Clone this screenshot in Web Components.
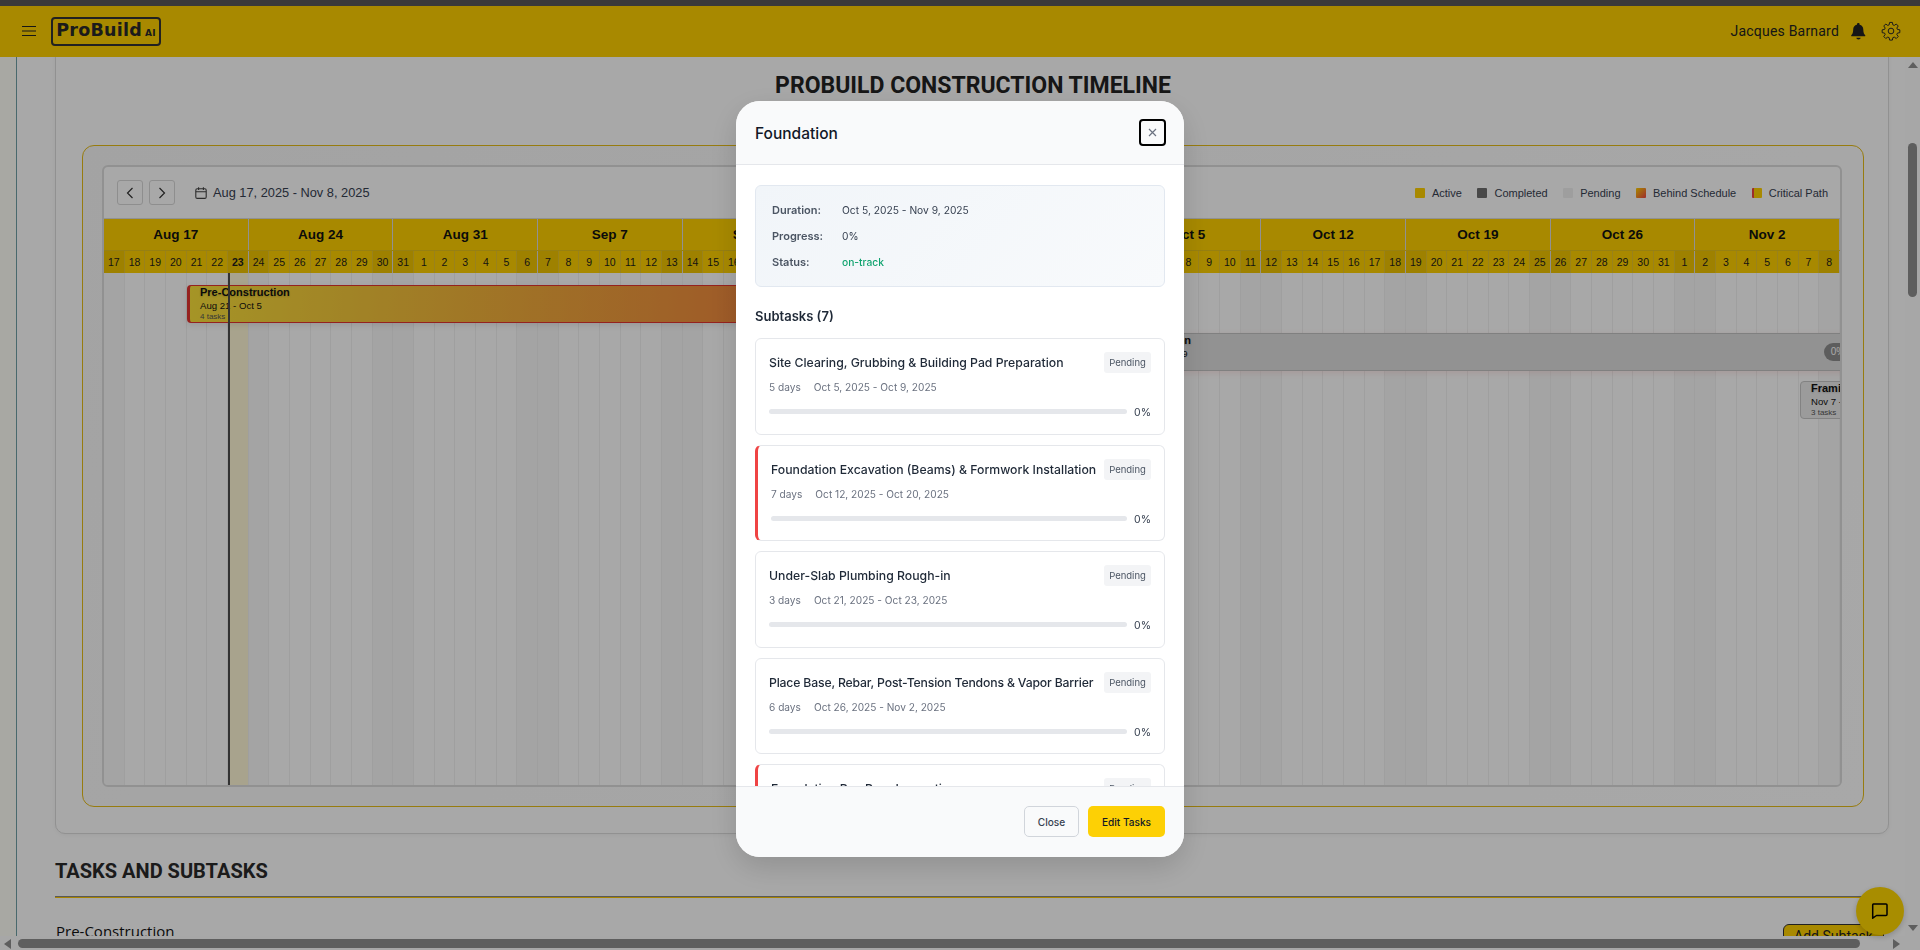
<!DOCTYPE html>
<html>
  <head>
    <meta charset="UTF-8">
    <title>ProBuild Construction Timeline</title>
    <style>
html, body {
  margin: 0;
  height: 950px;
  overflow: hidden;
  background: #fff;
  font-family: "Liberation Sans", Arial, sans-serif;
}
    </style>
    <script type="module">
// small helper: every element stamps its markup into an open shadow root
class Base extends HTMLElement {
  constructor() {
    super();
    this.attachShadow({ mode: 'open' });
  }
  connectedCallback() {
    if (!this.shadowRoot.firstChild) {
      this.shadowRoot.innerHTML = this.render();
    }
  }
}

class PbHeader extends Base {
  render() {
    return `
    <style>
      :host { display: flex; align-items: center; height: 51px; flex: none; background: #ffd100; color: #2a2a2a; box-sizing: border-box; font-family: Roboto, sans-serif; padding: 0 19px 0 22px; }
      .menu { width: 14px; height: 10px; margin-top: -1px; }
      .logo { display: flex; align-items: baseline; justify-content: center; box-sizing: border-box; width: 110px; height: 29px; margin-left: 15px; margin-top: -1px; border: 2px solid #333; border-radius: 4px; font-family: "DejaVu Sans", sans-serif; font-weight: 700; line-height: 23px; font-size: 17.5px; letter-spacing: .25px; }
      .logo small { font-size: 9px; margin-left: 3px; letter-spacing: .2px; }
      .space { flex: 1; }
      .name { font-size: 14px; letter-spacing: .2px; color: #222; margin-top: -2px; }
      .bell { width: 15px; height: 17px; margin-left: 12px; margin-top: -1px; }
      .gear { width: 20px; height: 20px; margin-left: 15px; margin-top: -1px; }
    </style>
    <svg class="menu" viewBox="0 0 14 10" fill="none" stroke="#222" stroke-width="1"><path d="M0 .5h14M0 5h14M0 9.5h14"/></svg>
    <div class="logo">ProBuild<small>AI</small></div>
    <div class="space"></div>
    <span class="name">Jacques Barnard</span>
    <svg class="bell" viewBox="0 0 15 17" fill="#222"><path d="M7.5 0c.7 0 1.1.5 1.1 1.1v.6c2.4.5 3.7 2.4 3.7 4.8 0 3.2.8 4.6 1.9 5.8.3.4.1 1-.5 1H.8c-.6 0-.8-.6-.5-1 1.1-1.2 1.9-2.6 1.9-5.8 0-2.4 1.3-4.3 3.7-4.8v-.6C5.9.5 6.8 0 7.5 0z"/><path d="M5.4 14.8h4.2c0 1.1-.9 1.7-2.1 1.7s-2.1-.6-2.1-1.7z"/></svg>
    <svg class="gear" viewBox="0 0 24 24" fill="none" stroke="#2a2a2a" stroke-width="1.2" stroke-linejoin="round"><path d="M10.3 2.3h3.4l.5 2.9 1.7.7 2.4-1.7 2.4 2.4-1.7 2.4.7 1.7 2.9.5v3.4l-2.9.5-.7 1.7 1.7 2.4-2.4 2.4-2.4-1.7-1.7.7-.5 2.9h-3.4l-.5-2.9-1.7-.7-2.4 1.7-2.4-2.4 1.7-2.4-.7-1.7-2.9-.5v-3.4l2.9-.5.7-1.7-1.7-2.4 2.4-2.4 2.4 1.7 1.7-.7z" transform="translate(0 -.6)"/><circle cx="12" cy="12" r="3.4"/></svg>`;
  }
}

const WEEKS = 12;
const MONTHS = ['Jan', 'Feb', 'Mar', 'Apr', 'May', 'Jun', 'Jul', 'Aug', 'Sep', 'Oct', 'Nov', 'Dec'];

function dayAt(i) {
  return new Date(2025, 7, 17 + i);
}

class PbGanttBar extends Base {
  render() {
    const pct = this.getAttribute('pct');
    return `
    <style>
      :host { position: absolute; display: block; box-sizing: border-box; height: 38px; border-radius: 4px; padding: 0 10px; line-height: 1; color: #111; white-space: nowrap; overflow: hidden; }
      :host([kind="behind"]) { background: linear-gradient(95deg, #fbe23a 0%, #f4c43a 20%, #ef4f42 100%); border: 1px solid #e3342f; border-left-width: 3px; box-shadow: 0 2px 6px rgba(0,0,0,.1); }
      :host([kind="pending"]) { padding-left: 13px; background: #dedede; border: 1px solid #c2c2c2; box-shadow: 0 2px 6px rgba(239,68,68,.12); }
      :host([kind="small"]) { background: #ececec; border: 1px solid #c6c6c6; }
      b { display: block; font-size: 11px; margin-top: 0; line-height: 13px; text-shadow: 0 1px 2px rgba(0,0,0,.18); }
      span { display: block; font-size: 9.6px; line-height: 13px; }
      em { display: block; font-style: normal; font-size: 8px; line-height: 9px; color: #555; }
      .pct { position: absolute; right: 8px; top: 9px; width: 28px; height: 18px; border-radius: 9px; background: #8e8e8e; color: #fff; font-size: 10px; line-height: 18px; text-align: center; }
    </style>
    <b><slot name="title"></slot></b><span><slot name="dates"></slot></span><em><slot name="tasks"></slot></em>
    ${pct ? `<div class="pct">${pct}</div>` : ''}`;
  }
}

class PbGantt extends Base {
  render() {
    let weekCells = '';
    let dayCells = '';
    let gridCells = '';
    for (let w = 0; w < WEEKS; w++) {
      const d = dayAt(w * 7);
      weekCells += `<div class="wk">${MONTHS[d.getMonth()]} ${d.getDate()}</div>`;
    }
    for (let i = 0; i < WEEKS * 7; i++) {
      const d = dayAt(i);
      const we = d.getDay() === 0 || d.getDay() === 6;
      const today = i === 6;
      const weekEnd = i % 7 === 6;
      dayCells += `<div class="d${we ? ' we' : ''}${today ? ' today' : ''}${weekEnd ? ' end' : ''}">${d.getDate()}</div>`;
      gridCells += `<div class="c${we ? ' we' : ''}${today ? ' today' : ''}"></div>`;
    }
    const legend = [['Active', 'background:#ffd100'], ['Completed', 'background:#6e6e6e'], ['Pending', 'background:#f0f0f0'],
      ['Behind Schedule', 'background:linear-gradient(135deg,#ffd100,#ef4444)'], ['Critical Path', 'background:#ffd100;border-left:2px solid #ef4444;width:8px']]
      .map(([t, s]) => `<span class="lg"><i style="${s}"></i>${t}</span>`).join('');
    return `
    <style>
      :host { display: flex; flex-direction: column; box-sizing: border-box; height: 622px; border: 2px solid #dcdcdc; border-radius: 6px; overflow: hidden; background: #fff; }
      .bar { display: flex; align-items: center; justify-content: space-between; height: 52px; flex: none; padding: 0 12px 0 13px; border-bottom: 1px solid #dcdcdc; box-sizing: border-box; }
      .nav { display: flex; align-items: center; gap: 6px; }
      button { box-sizing: border-box; width: 26px; height: 25px; padding: 0; background: #fff; border: 1px solid #d8d8d8; border-radius: 3px; display: flex; align-items: center; justify-content: center; }
      button svg { width: 8px; height: 12px; }
      .range { display: flex; align-items: center; margin-left: 14px; font-size: 12.8px; color: #374151; }
      .range svg { width: 12px; height: 12px; margin-right: 6px; }
      .legend { display: flex; gap: 15.5px; font-size: 11px; color: #374151; }
      .lg { display: flex; align-items: center; }
      .lg i { display: block; width: 10px; height: 10px; margin-right: 7px; border-radius: 1px; }
      .weeks, .days, .grid { display: grid; grid-template-columns: repeat(84, 1fr); flex: none; width: 1736px; }
      .weeks { grid-template-columns: repeat(12, 1fr); height: 32px; background: #ffd100; border-bottom: 1px solid #e5c21a; box-sizing: border-box; }
      .wk { display: flex; align-items: center; justify-content: center; font-size: 13.5px; font-weight: 700; color: #111; border-right: 1px solid #dcdcdc; box-sizing: border-box; }
      .days { height: 22px; background: #ffd100; font-size: 10.5px; color: #1c1c1c; }
      .d { display: flex; align-items: center; justify-content: center; border-right: 1px solid #e9c52b; box-sizing: border-box; overflow: hidden; }
      .d.we { background: #f0c400; }
      .d.today { font-weight: 700; }
      .d.end { border-right: 1px solid #dcdcdc; }
      .area { position: relative; flex: 1; overflow: hidden; }
      .grid { height: 100%; }
      .c { border-right: 1px solid #f1f1f1; box-sizing: border-box; }
      .c.we { background: #f9f9f9; }
      .c.today { background: #fff8d6; }
      .now { position: absolute; left: 124px; top: 0; bottom: 0; width: 2px; background: #4c4c4c; }
    </style>
    <div class="bar">
      <div class="nav">
        <button><svg viewBox="0 0 8 12" fill="none" stroke="#333" stroke-width="1.2"><path d="M6.5 1 1.5 6l5 5"/></svg></button>
        <button><svg viewBox="0 0 8 12" fill="none" stroke="#333" stroke-width="1.2"><path d="M1.5 1l5 5-5 5"/></svg></button>
        <div class="range"><svg viewBox="0 0 12 12" fill="none" stroke="#444" stroke-width="1.1"><rect x=".8" y="1.8" width="10.4" height="9.6" rx="1.4"/><path d="M.8 4.8h10.4M3.6 .3v2.6M8.4 .3v2.6"/></svg>Aug 17, 2025 - Nov 8, 2025</div>
      </div>
      <div class="legend">${legend}</div>
    </div>
    <div class="weeks">${weekCells}</div>
    <div class="days">${dayCells}</div>
    <div class="area">
      <div class="grid">${gridCells}</div>
      <slot></slot>
      <div class="now"></div>
    </div>`;
  }
}

class PbTimelineCard extends Base {
  render() {
    return `
    <style>
      :host { display: block; box-sizing: border-box; margin: -17px 16px 0 38px; padding: 31px 24px 26px 26px; border: 1px solid #dcdcdc; border-radius: 10px; background: #fff; box-shadow: 0 1px 4px rgba(0,0,0,.05); }
      h1 { margin: 0 0 45px; font: 700 23px/28px Roboto, sans-serif; color: #222; text-align: center; }
      .panel { box-sizing: border-box; padding: 19px 21px 19px 19px; border: 1px solid #e6bc17; border-radius: 12px; background: linear-gradient(135deg, #f8f8f8, #ffffff); }
    </style>
    <h1><slot name="title"></slot></h1>
    <div class="panel"><slot></slot></div>`;
  }
}

class PbTasks extends Base {
  render() {
    return `
    <style>
      :host { display: block; margin: 25px 16px 0 38px; }
      h2 { margin: 0; padding-bottom: 13px; font: 700 20px/24px Roboto, sans-serif; color: #2a2a2a; border-bottom: 1px solid #888; box-shadow: 0 1px 0 #ffc800; }
      .row { display: flex; justify-content: space-between; align-items: flex-start; margin-top: 27px; padding-right: 5px; }
      .name { font: 400 15px/20px "Open Sans", sans-serif; color: #111; padding: 0 0 0 1px; margin-top: -3px; }
      .add { box-sizing: border-box; width: 101px; height: 24px; margin: 0; padding: 0; background: #ffd100; border: 1px solid #333; border-radius: 6px; font: 400 14px Roboto, sans-serif; color: #222; }
    </style>
    <h2><slot name="title"></slot></h2>
    <div class="row"><span class="name"><slot name="task"></slot></span><button class="add">Add Subtask</button></div>`;
  }
}

class PbChat extends Base {
  render() {
    return `
    <style>
      :host { position: fixed; left: 1856px; top: 887px; width: 48px; height: 48px; border-radius: 50%; background: #ffd700; display: flex; align-items: center; justify-content: center; box-shadow: 0 2px 6px rgba(0,0,0,.2); }
      svg { width: 18px; height: 18px; }
    </style>
    <svg viewBox="0 0 18 18" fill="none" stroke="#000" stroke-width="1.5" stroke-linejoin="round"><path d="M2.5 2h12.5a1 1 0 0 1 1 1v9.5a1 1 0 0 1-1 1H5.5l-3.8 2.7V3a1 1 0 0 1 .8-1z"/></svg>`;
  }
}

class PbVScroll extends Base {
  render() {
    return `
    <style>
      :host { display: flex; flex-direction: column; align-items: center; flex: none; width: 15px; background: #fdfdfd; box-sizing: border-box; padding-top: 5px; }
      .up, .down { width: 0; height: 0; border: 5px solid transparent; }
      .up { border-top: 0; border-bottom: 6px solid #8f8f8f; }
      .down { border-bottom: 0; border-top: 6px solid #8f8f8f; margin-top: 628px; }
      .thumb { width: 9px; height: 154px; margin-top: 75px; border-radius: 5px; background: #8f8f8f; }
    </style>
    <div class="up"></div><div class="thumb"></div><div class="down"></div>`;
  }
}

class PbHScroll extends Base {
  render() {
    return `
    <style>
      :host { display: flex; align-items: center; flex: none; height: 14px; background: #fdfdfd; box-sizing: border-box; padding: 1px 0 0 4px; }
      .left, .right { width: 0; height: 0; border: 5px solid transparent; }
      .left { border-left: 0; border-right: 7px solid #8f8f8f; }
      .right { border-right: 0; border-left: 7px solid #8f8f8f; margin-left: 33px; }
      .thumb { width: 1842px; height: 9px; margin-left: 7px; border-radius: 5px; background: #8f8f8f; }
    </style>
    <div class="left"></div><div class="thumb"></div><div class="right"></div>`;
  }
}

class PbShell extends Base {
  render() {
    return `
    <style>
      :host { display: flex; flex-direction: column; height: 950px; }
      .top { height: 6px; flex: none; background: #585858; }
      .mid { display: flex; flex: 1; min-height: 0; }
      .rail { width: 16px; flex: none; background: #fffff8; border-right: 1px solid #6fa0a6; }
      main { flex: 1; min-width: 0; overflow: hidden; }
    </style>
    <div class="top"></div>
    <pb-header></pb-header>
    <div class="mid">
      <div class="rail"></div>
      <main><slot></slot></main>
      <pb-vscroll></pb-vscroll>
    </div>
    <pb-hscroll></pb-hscroll>`;
  }
}

class PbSubtask extends Base {
  render() {
    return `
    <style>
      :host { display: block; box-sizing: border-box; height: 96.5px; padding: 13px 13px 0; border: 1px solid #e5e7eb; border-radius: 6px; background: #fff; font-family: Inter, sans-serif; flex: none; }
      :host([critical]) { border-left: 3px solid #ef4444; }
      .top { display: flex; justify-content: space-between; align-items: center; height: 21px; }
      .title { font-size: 12.25px; font-weight: 500; color: #1f2937; white-space: nowrap; min-width: 0; }
      .badge { flex: none; box-sizing: border-box; height: 21px; width: 47px; text-align: center; line-height: 21px; border-radius: 3px; background: #f3f4f6; color: #4b5563; font-size: 9.5px; }
      .meta { display: flex; gap: 13px; height: 16px; margin-top: 6px; line-height: 16px; font-size: 10.15px; color: #6b7280; }
      .prog { display: flex; align-items: center; gap: 7px; height: 15px; margin-top: 10px; font-size: 10.5px; color: #374151; }
      .track { flex: 1; height: 5px; margin-top: -2px; background: #e5e7eb; border-radius: 3px; }
    </style>
    <div class="top"><span class="title"><slot></slot></span><span class="badge">Pending</span></div>
    <div class="meta"><span>${this.getAttribute('days')}</span><span>${this.getAttribute('dates')}</span></div>
    <div class="prog"><div class="track"></div><span>0%</span></div>`;
  }
}

class PbModal extends Base {
  render() {
    return `
    <style>
      :host { position: fixed; inset: 0; display: flex; align-items: center; justify-content: center; box-sizing: border-box; padding-top: 8px; background: rgba(0,0,0,.34); font-family: Inter, sans-serif; }
      .box { display: flex; flex-direction: column; width: 448px; height: 756px; border-radius: 24px; overflow: hidden; background: #fff; box-shadow: 0 10px 30px rgba(0,0,0,.15); }
      header { display: flex; align-items: center; justify-content: space-between; box-sizing: border-box; height: 64px; flex: none; padding: 0 18px 0 19px; background: #f9fafb; border-bottom: 1px solid #e5e7eb; }
      h2 { margin: 2px 0 0; font-size: 15.5px; font-weight: 500; color: #111827; }
      .x { box-sizing: border-box; width: 27px; height: 27px; padding: 0; margin-top: -1px; background: transparent; border: 2px solid #000; border-radius: 4px; display: flex; align-items: center; justify-content: center; }
      .x svg { width: 9px; height: 9px; }
      .body { flex: 1; min-height: 0; overflow: hidden; padding: 20px 19px; display: flex; flex-direction: column; }
      .info { box-sizing: border-box; height: 102px; flex: none; padding: 11px 16px; border: 1px solid #e2e8f0; border-radius: 6px; background: linear-gradient(135deg, #f1f5f9, #f8fafc); font-size: 10.25px; color: #374151; }
      .info div { display: flex; height: 26px; align-items: center; }
      .info b { width: 70px; flex: none; font-size: 11px; font-weight: 600; color: #4b5563; }
      .ok { color: #10a36f; font-weight: 500; }
      h3 { margin: 19px 0 12px; font-size: 13px; line-height: 20px; font-weight: 600; color: #1f2937; }
      .list { display: flex; flex-direction: column; gap: 10px; }
      footer { display: flex; justify-content: flex-end; gap: 9px; box-sizing: border-box; height: 71px; flex: none; padding: 19px 19px 0; background: #f9fafb; border-top: 1px solid #e5e7eb; }
      footer button { box-sizing: border-box; height: 31px; padding: 0; border-radius: 5px; font: 500 10.1px Inter, sans-serif; }
      .close { width: 55px; background: #f9fafb; border: 1px solid #d1d5db; color: #374151; }
      .edit { width: 77px; background: #fdd005; border: 0; color: #111827; }
    </style>
    <div class="box">
      <header>
        <h2>Foundation</h2>
        <button class="x"><svg viewBox="0 0 9 9" fill="none" stroke="#6b7280" stroke-width="1.2"><path d="M1 1l7 7M8 1 1 8"/></svg></button>
      </header>
      <div class="body">
        <div class="info">
          <div><b>Duration:</b><span>Oct 5, 2025 - Nov 9, 2025</span></div>
          <div><b>Progress:</b><span>0%</span></div>
          <div><b>Status:</b><span class="ok">on-track</span></div>
        </div>
        <h3>Subtasks (7)</h3>
        <div class="list"><slot></slot></div>
      </div>
      <footer><button class="close">Close</button><button class="edit">Edit Tasks</button></footer>
    </div>`;
  }
}

customElements.define('pb-header', PbHeader);
customElements.define('pb-gantt-bar', PbGanttBar);
customElements.define('pb-gantt', PbGantt);
customElements.define('pb-timeline-card', PbTimelineCard);
customElements.define('pb-tasks', PbTasks);
customElements.define('pb-chat', PbChat);
customElements.define('pb-vscroll', PbVScroll);
customElements.define('pb-hscroll', PbHScroll);
customElements.define('pb-shell', PbShell);
customElements.define('pb-subtask', PbSubtask);
customElements.define('pb-modal', PbModal);
    </script>
  </head>
  <body>
    <pb-shell>
      <pb-timeline-card>
        <span slot="title">PROBUILD CONSTRUCTION TIMELINE</span>
        <pb-gantt>
          <pb-gantt-bar kind="behind" style="left:83px;top:12px;width:930px">
            <span slot="title">Pre-Construction</span><span slot="dates">Aug 21 - Oct 5</span><span slot="tasks">4 tasks</span>
          </pb-gantt-bar>
          <pb-gantt-bar kind="pending" pct="0%" style="left:1013px;top:60px;width:744px">
            <span slot="title">Foundation</span><span slot="dates">Oct 5 - Nov 9</span><span slot="tasks">7 tasks</span>
          </pb-gantt-bar>
          <pb-gantt-bar kind="small" style="left:1696px;top:108px;width:120px">
            <span slot="title">Framing</span><span slot="dates">Nov 7 - Nov 28</span><span slot="tasks">3 tasks</span>
          </pb-gantt-bar>
        </pb-gantt>
      </pb-timeline-card>
      <pb-tasks>
        <span slot="title">TASKS AND SUBTASKS</span>
        <span slot="task">Pre-Construction</span>
      </pb-tasks>
    </pb-shell>
    <pb-chat></pb-chat>
    <pb-modal>
      <pb-subtask days="5 days" dates="Oct 5, 2025 - Oct 9, 2025">Site Clearing, Grubbing &amp; Building Pad Preparation</pb-subtask>
      <pb-subtask critical days="7 days" dates="Oct 12, 2025 - Oct 20, 2025">Foundation Excavation (Beams) &amp; Formwork Installation</pb-subtask>
      <pb-subtask days="3 days" dates="Oct 21, 2025 - Oct 23, 2025">Under-Slab Plumbing Rough-in</pb-subtask>
      <pb-subtask days="6 days" dates="Oct 26, 2025 - Nov 2, 2025"><span style="letter-spacing:-.18px">Place Base, Rebar, Post-Tension Tendons &amp; Vapor Barrier</span></pb-subtask>
      <pb-subtask critical days="1 day" dates="Nov 3, 2025 - Nov 3, 2025">Foundation Pre-Pour Inspection</pb-subtask>
    </pb-modal>
  </body>
</html>
